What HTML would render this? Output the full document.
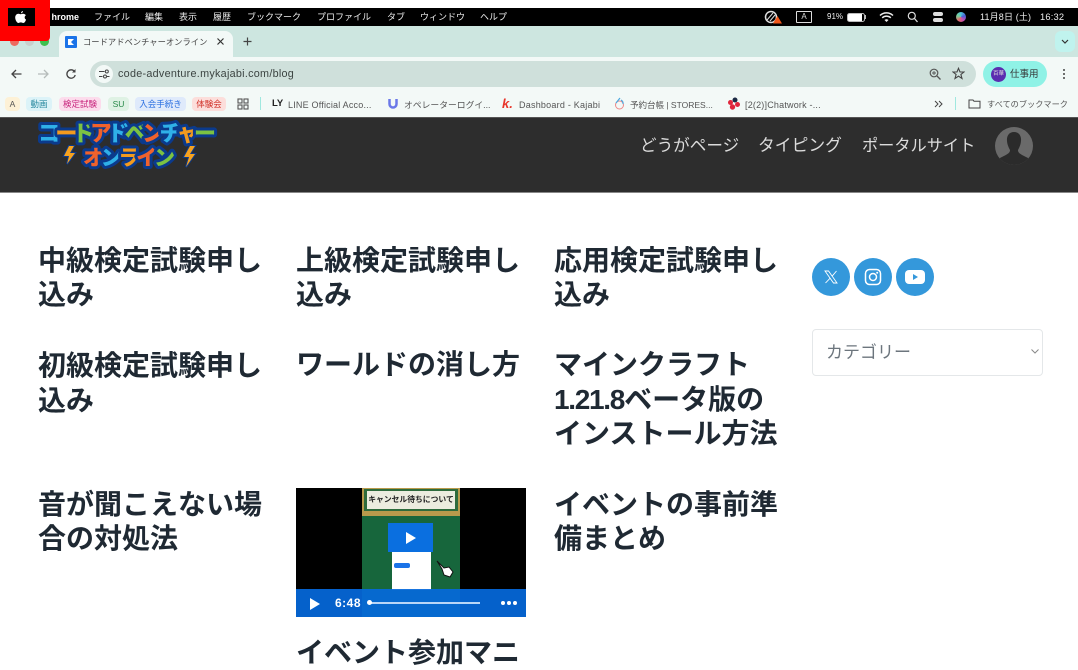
<!DOCTYPE html>
<html lang="ja"><head><meta charset="utf-8"><title>Blog</title>
<style>
html,body{margin:0;padding:0;background:#fff}
body{width:1078px;height:666px;overflow:hidden;position:relative;font-family:"Liberation Sans","Noto Sans CJK JP",sans-serif}
.a{position:absolute;white-space:nowrap}
.m{top:10px;font-size:9px;line-height:14px;color:#eee}
.bm{top:98px;font-size:9px;line-height:14px;color:#555}
.chip{top:97px;height:14px;line-height:15px;font-size:8.5px;border-radius:4px;text-align:center}
h2{position:absolute;margin:0;font-size:28px;line-height:34px;font-weight:700;color:#1f2933;white-space:nowrap;font-family:"Liberation Sans","Noto Sans CJK JP",sans-serif;-webkit-font-smoothing:antialiased}
.nav{top:135px;font-size:16.6px;line-height:22px;color:#dcdcdc}
</style></head><body>
<div class="a" style="left:0;top:26px;width:1078px;height:31px;background:#cde6e0"></div>
<div class="a" style="left:0;top:57px;width:1078px;height:60px;background:#f3f9f7"></div>
<div class="a" style="left:0;top:8px;width:1078px;height:18px;background:#000"></div>

<div class="a" style="left:10px;top:37px;width:9px;height:9px;border-radius:50%;background:#ee6a5f"></div>
<div class="a" style="left:25px;top:37px;width:9px;height:9px;border-radius:50%;background:#c9cfcc"></div>
<div class="a" style="left:40px;top:37px;width:9px;height:9px;border-radius:50%;background:#3fc04f"></div>
<div class="a" style="left:0;top:0;width:50px;height:41px;background:#f00;border-radius:0 0 4px 0"></div>
<div class="a" style="left:8px;top:8px;width:27px;height:18px;background:#000"></div>
<svg class="a" style="left:14px;top:10px" width="13" height="14" viewBox="0 0 13 14"><path d="M9 1C7.800 1.200 7 2.100 7 3.300C8.200 3.200 9 2.200 9 1ZM6.800 4.200C6 4.200 5.300 3.700 4.400 3.700C2.700 3.700 1.200 5.200 1.200 7.500C1.200 10 3 13 4.400 13C5.200 13 5.700 12.400 6.800 12.400C7.900 12.400 8.300 13 9.200 13C10.500 13 11.600 11 12.100 9.600C10.400 8.900 10.100 6.300 11.900 5.200C11.100 4.100 10 3.700 9.100 3.700C8.100 3.700 7.400 4.200 6.800 4.200Z" fill="#fff"/></svg>
<div class="a m" style="left:47px;font-weight:700;color:#fff;width:32px;overflow:hidden;direction:rtl">hrome</div>
<div class="a m" style="left:94px">ファイル</div>
<div class="a m" style="left:145px">編集</div>
<div class="a m" style="left:179px">表示</div>
<div class="a m" style="left:213px">履歴</div>
<div class="a m" style="left:247px">ブックマーク</div>
<div class="a m" style="left:317px">プロファイル</div>
<div class="a m" style="left:387px">タブ</div>
<div class="a m" style="left:420px">ウィンドウ</div>
<div class="a m" style="left:480px">ヘルプ</div>

<svg class="a" style="left:763px;top:10px" width="20" height="14" viewBox="0 0 20 14"><circle cx="8" cy="7" r="5.500" fill="none" stroke="#ddd" stroke-width="1.500"/><path d="M4 10L10 3M7 11L12 5" stroke="#ddd"/><path d="M14.500 6L19 13.500H10Z" fill="#f0571a"/></svg>
<div class="a" style="left:796px;top:11px;width:14px;height:10px;border:1px solid #ddd;border-radius:1px;color:#ddd;font-size:8px;line-height:10px;text-align:center">A</div>
<div class="a m" style="left:827px;font-size:8px">91%</div>
<div class="a" style="left:847px;top:13px;width:16px;height:7px;border:1px solid #bbb;border-radius:2.500px;background:linear-gradient(90deg,#fff 88%,#000 88%)"></div>
<div class="a" style="left:865px;top:15px;width:1px;height:4px;background:#bbb"></div>
<svg class="a" style="left:879px;top:11px" width="15" height="12" viewBox="0 0 15 12"><path d="M1 4.500C4.500 1 10.500 1 14 4.500M3.200 6.800C5.600 4.500 9.400 4.500 11.800 6.800" fill="none" stroke="#eee" stroke-width="1.500"/><path d="M5.500 9C6.700 8 8.300 8 9.500 9L7.500 11Z" fill="#eee"/></svg>
<svg class="a" style="left:907px;top:11px" width="11" height="12" viewBox="0 0 11 12"><circle cx="4.800" cy="4.800" r="3.500" fill="none" stroke="#ddd" stroke-width="1.200"/><path d="M7.500 7.500L10.500 11" stroke="#ddd" stroke-width="1.300"/></svg>
<div class="a" style="left:933px;top:12px;width:10px;height:4px;border-radius:2px;background:#ddd"></div>
<div class="a" style="left:933px;top:18px;width:10px;height:4px;border-radius:2px;background:#ddd"></div>
<div class="a" style="left:956px;top:12px;width:10px;height:10px;border-radius:50%;background:conic-gradient(#4ec5d8,#4a5fd8,#c44fb0,#e06a6a,#7ed09a,#4ec5d8)"></div>
<div class="a m" style="left:980px;font-size:9px;letter-spacing:.15px">11月8日 (土)</div>
<div class="a m" style="left:1040px;font-size:9.300px;letter-spacing:.2px">16:32</div>

<div class="a" style="left:59px;top:31px;width:174px;height:26px;background:#f3f9f7;border-radius:8px 8px 0 0"></div>
<div class="a" style="left:65px;top:36px;width:12px;height:12px;background:#1a73e8;border-radius:1px"></div>
<svg class="a" style="left:65px;top:36px" width="12" height="12" viewBox="0 0 12 12"><path d="M3 3H9L6 6L9 9H3Z" fill="#fff"/></svg>
<div class="a" style="left:83px;top:35px;font-size:8.300px;line-height:14px;color:#444">コードアドベンチャーオンライン</div>
<svg class="a" style="left:216px;top:37px" width="9" height="9" viewBox="0 0 9 9"><path d="M1.500 1.500L7.500 7.500M7.500 1.500L1.500 7.500" stroke="#333" stroke-width="1.200"/></svg>
<svg class="a" style="left:242px;top:36px" width="11" height="11" viewBox="0 0 11 11"><path d="M5.500 1.500V9.500M1.500 5.500H9.500" stroke="#444" stroke-width="1.200"/></svg>
<div class="a" style="left:1055px;top:31px;width:20px;height:21px;background:#c0f3ee;border-radius:6px"></div>
<svg class="a" style="left:1060px;top:38px" width="10" height="7" viewBox="0 0 10 7"><path d="M2 2L5 5L8 2" fill="none" stroke="#333" stroke-width="1.200"/></svg>

<svg class="a" style="left:10px;top:67px" width="70" height="14" viewBox="0 0 70 14"><path d="M11.500 7H2M6 3L2 7L6 11" fill="none" stroke="#444" stroke-width="1.300"/><path d="M28 7H38M34 3L38 7L34 11" fill="none" stroke="#b5bcba" stroke-width="1.300"/><path d="M64.500 4.500A4.200 4.200 0 1 0 65.200 8" fill="none" stroke="#444" stroke-width="1.300"/><path d="M65.500 2V5.500H62Z" fill="#444"/></svg>
<div class="a" style="left:90px;top:61px;width:886px;height:26px;background:#cfe0db;border-radius:13px"></div>
<div class="a" style="left:95px;top:65px;width:18px;height:18px;background:#f3f9f7;border-radius:50%"></div>
<svg class="a" style="left:98px;top:68px" width="12" height="12" viewBox="0 0 12 12"><path d="M1 3.500H6.500M1 8.500H4.500" stroke="#444" stroke-width="1.100"/><circle cx="8.800" cy="3.500" r="1.500" fill="none" stroke="#444"/><circle cx="7" cy="8.500" r="1.500" fill="none" stroke="#444"/><path d="M9 8.500H11.500" stroke="#444"/></svg>
<div class="a" style="left:118px;top:67px;font-size:10.800px;line-height:15px;color:#3c4442;letter-spacing:.27px">code-adventure.mykajabi.com/blog</div>
<svg class="a" style="left:929px;top:68px" width="12" height="12" viewBox="0 0 12 12"><circle cx="5" cy="5" r="3.800" fill="none" stroke="#555" stroke-width="1.200"/><path d="M8 8L11.500 11.500" stroke="#555" stroke-width="1.300"/><path d="M3 5H7M5 3V7" stroke="#555" stroke-width=".9"/></svg>
<svg class="a" style="left:952px;top:67px" width="13" height="13" viewBox="0 0 13 13"><path d="M6.500 1.300L8 5H12L8.900 7.500L10 11.500L6.500 9.200L3 11.500L4.100 7.500L1 5H5Z" fill="none" stroke="#444" stroke-width="1.100"/></svg>
<div class="a" style="left:983px;top:61px;width:64px;height:26px;background:#8ff2e6;border-radius:13px"></div>
<div class="a" style="left:991px;top:67px;width:15px;height:15px;background:#5b2db0;border-radius:50%;color:#ddd;font-size:5.500px;line-height:15px;text-align:center">百華</div>
<div class="a" style="left:1010px;top:67px;font-size:9.500px;line-height:15px;color:#333">仕事用</div>
<div class="a" style="left:1063px;top:69px;width:2px;height:2px;background:#444;border-radius:50%;box-shadow:0 4px 0 #444,0 8px 0 #444"></div>

<div class="a chip" style="left:5px;width:15px;background:#fdf1d6;color:#555">A</div>
<div class="a chip" style="left:26px;width:26px;background:#dcf3f8;color:#2a8aa0">動画</div>
<div class="a chip" style="left:59px;width:42px;background:#fcdcec;color:#c8267e">検定試験</div>
<div class="a chip" style="left:108px;width:21px;background:#dff2e4;color:#2a8a4a">SU</div>
<div class="a chip" style="left:135px;width:51px;background:#dfeafb;color:#2a6fe0">入会手続き</div>
<div class="a chip" style="left:192px;width:34px;background:#fcdedb;color:#d03028">体験会</div>
<svg class="a" style="left:237px;top:98px" width="12" height="12" viewBox="0 0 12 12"><g fill="none" stroke="#555" stroke-width="1.100"><rect x="1" y="1" width="4" height="4"/><rect x="7" y="1" width="4" height="4"/><rect x="1" y="7" width="4" height="4"/><rect x="7" y="7" width="4" height="4"/></g></svg>
<div class="a" style="left:260px;top:97px;width:1px;height:13px;background:#9fe8df"></div>
<div class="a" style="left:272px;top:97px;font-size:9.500px;line-height:14px;font-weight:700;color:#222">LY</div>
<div class="a bm" style="left:288px;letter-spacing:.2px">LINE Official Acco...</div>
<svg class="a" style="left:387px;top:97px" width="12" height="13" viewBox="0 0 12 13"><path d="M2.500 2V7A3.500 3.500 0 0 0 9.500 7V2" fill="none" stroke="#6a78e8" stroke-width="2.500"/></svg>
<div class="a bm" style="left:404px;font-size:8.800px">オペレーターログイ...</div>
<div class="a" style="left:502px;top:96px;font-size:13px;line-height:15px;font-weight:700;font-style:italic;color:#e8352a">k.</div>
<div class="a bm" style="left:519px;letter-spacing:.23px">Dashboard - Kajabi</div>
<svg class="a" style="left:613px;top:97px" width="13" height="14" viewBox="0 0 13 14"><circle cx="6.500" cy="8" r="4" fill="none" stroke="#e88" stroke-width="1"/><path d="M7 1L3 6M8 3A4 4 0 0 1 10 7" fill="none" stroke="#4aa8e0" stroke-width="1.200"/></svg>
<div class="a bm" style="left:630px;font-size:8.500px">予約台帳 | STORES...</div>
<svg class="a" style="left:727px;top:97px" width="14" height="14" viewBox="0 0 14 14"><circle cx="8" cy="3" r="2.500" fill="#1c2a44"/><circle cx="3.500" cy="5.500" r="2.500" fill="#e0263c"/><circle cx="10.500" cy="7.500" r="2.500" fill="#e0263c"/><circle cx="5.500" cy="10" r="2.700" fill="#e0263c"/></svg>
<div class="a bm" style="left:745px;letter-spacing:.2px">[2(2)]Chatwork -...</div>
<svg class="a" style="left:934px;top:100px" width="9" height="8" viewBox="0 0 9 8"><path d="M1 1L4 4L1 7M5 1L8 4L5 7" fill="none" stroke="#444"/></svg>
<div class="a" style="left:955px;top:97px;width:1px;height:13px;background:#9fe8df"></div>
<svg class="a" style="left:968px;top:98px" width="13" height="11" viewBox="0 0 13 11"><path d="M1 2H5L6 3.200H12V10H1Z" fill="none" stroke="#444"/></svg>
<div class="a bm" style="left:987px;font-size:8.200px">すべてのブックマーク</div>

<div class="a" style="left:0;top:117px;width:1078px;height:76px;background:#2d2d2d;border-top:1px solid #555;border-bottom:1px solid #888;box-sizing:border-box"></div>
<svg class="a" style="left:30px;top:118px" width="195" height="56" viewBox="0 0 195 56">
<g font-family="'Liberation Sans','Noto Sans CJK JP',sans-serif" font-weight="900" style="paint-order:stroke" stroke-linejoin="round">
<text x="8" y="23" font-size="22" textLength="178" stroke="#0b3a8c" stroke-width="6"><tspan fill="#2fb0e8">コ</tspan><tspan fill="#f39a1e">ー</tspan><tspan fill="#7cc242">ド</tspan><tspan fill="#f0622c">ア</tspan><tspan fill="#2fb0e8">ド</tspan><tspan fill="#7cc242">ベ</tspan><tspan fill="#f0622c">ン</tspan><tspan fill="#2fb0e8">チ</tspan><tspan fill="#f39a1e">ャ</tspan><tspan fill="#7cc242">ー</tspan></text>
<text x="53" y="47" font-size="21" textLength="92" stroke="#0b3a8c" stroke-width="6"><tspan fill="#f0622c">オ</tspan><tspan fill="#2fb0e8">ン</tspan><tspan fill="#f39a1e">ラ</tspan><tspan fill="#f0622c">イ</tspan><tspan fill="#7cc242">ン</tspan></text>
</g>
<path d="M39 28L34 38L39 38L37 46L45 35L40 35L44 28Z" fill="#f7a21e" stroke="#0b3a8c" stroke-width="2" paint-order="stroke"/>
<path d="M160 28L154 39L159 39L156 49L165 36L160 36L165 28Z" fill="#f7a21e" stroke="#0b3a8c" stroke-width="2" paint-order="stroke"/>
</svg>
<div class="a nav" style="left:640px">どうがページ</div>
<div class="a nav" style="left:758px;font-size:16.800px">タイピング</div>
<div class="a nav" style="left:862px;font-size:16.200px">ポータルサイト</div>
<svg class="a" style="left:995px;top:127px" width="38" height="38" viewBox="0 0 38 38"><defs><clipPath id="c"><circle cx="19" cy="19" r="19"/></clipPath></defs><g clip-path="url(#c)"><rect width="38" height="38" fill="#6a6a6a"/><path d="M19 5C14 5 11.500 9 12 14C12.300 18 14 21 15 23C15 26 13 27 5 31V38H33V31C25 27 23 26 23 23C24 21 25.700 18 26 14C26.500 9 24 5 19 5Z" fill="#2b2b2b"/></g></svg>

<h2 style="left:38px;top:244px">中級検定試験申し<br>込み</h2>
<h2 style="left:296px;top:244px">上級検定試験申し<br>込み</h2>
<h2 style="left:554px;top:244px">応用検定試験申し<br>込み</h2>
<h2 style="left:38px;top:348px;line-height:35px">初級検定試験申し<br>込み</h2>
<h2 style="left:296px;top:348px">ワールドの消し方</h2>
<h2 style="left:554px;top:348px;line-height:34.500px">マインクラフト<br><span style="letter-spacing:-1.300px">1.21.8</span>ベータ版の<br>インストール方法</h2>
<h2 style="left:38px;top:488px">音が聞こえない場<br>合の対処法</h2>
<h2 style="left:554px;top:488px">イベントの事前準<br>備まとめ</h2>
<h2 style="left:296px;top:636px">イベント参加マニ</h2>

<div class="a" style="left:296px;top:488px;width:230px;height:129px;background:#000;overflow:hidden">
 <div class="a" style="left:66px;top:0;width:98px;height:129px;background:#17663c"></div>
 <div class="a" style="left:66px;top:0;width:98px;height:28px;background:#b89a4c"></div>
 <div class="a" style="left:68px;top:1px;width:94px;height:22px;background:#2e6b3c"></div>
 <div class="a" style="left:71px;top:3px;width:88px;height:18px;background:#ececdf;color:#222;font-size:7.800px;line-height:18px;font-weight:700;text-align:center">キャンセル待ちについて</div>
 <div class="a" style="left:96px;top:62px;width:39px;height:40px;background:#fff"></div>
 <div class="a" style="left:92px;top:35px;width:45px;height:29px;background:#0a6fe0"></div>
 <svg class="a" style="left:108px;top:42px" width="14" height="16" viewBox="0 0 14 16"><path d="M2 2L12 8L2 14Z" fill="#fff"/></svg>
 <div class="a" style="left:98px;top:75px;width:16px;height:5px;background:#1a73e8;border-radius:2px"></div>
 <svg class="a" style="left:139px;top:71px" width="20" height="20" viewBox="0 0 20 20"><path d="M2 2L9 9L14 8L18 13L15 18L9 16L7 10Z" fill="#fff" stroke="#111"/></svg>
 <div class="a" style="left:0;top:101px;width:230px;height:28px;background:rgba(5,105,220,.92)"></div>
 <svg class="a" style="left:13px;top:109px" width="12" height="14" viewBox="0 0 12 14"><path d="M1 1L11 7L1 13Z" fill="#fff"/></svg>
 <div class="a" style="left:39px;top:107px;font-size:12px;line-height:16px;font-weight:700;color:#fff;letter-spacing:.5px">6:48</div>
 <div class="a" style="left:73px;top:114px;width:111px;height:2px;background:#b9d6f7"></div>
 <div class="a" style="left:71px;top:112px;width:5px;height:5px;border-radius:50%;background:#fff"></div>
 <div class="a" style="left:205px;top:113px;width:4px;height:4px;border-radius:50%;background:#fff;box-shadow:6px 0 0 #fff,12px 0 0 #fff"></div>
</div>

<div class="a" style="left:812px;top:258px;width:38px;height:38px;border-radius:50%;background:#3498db"></div>
<svg class="a" style="left:823px;top:269px" width="16" height="16" viewBox="0 0 16 16"><path d="M2 2H5.500L14 14H10.500ZM13.500 2L9 7.300M7 9.300L2.500 14" fill="none" stroke="#fff" stroke-width=".9"/></svg>
<div class="a" style="left:854px;top:258px;width:38px;height:38px;border-radius:50%;background:#3498db"></div>
<svg class="a" style="left:864px;top:268px" width="18" height="18" viewBox="0 0 18 18"><rect x="1.500" y="1.500" width="15" height="15" rx="4" fill="none" stroke="#fff" stroke-width="1.500"/><circle cx="9" cy="9" r="3.500" fill="none" stroke="#fff" stroke-width="1.500"/><circle cx="13.200" cy="4.800" r="1" fill="#fff"/></svg>
<div class="a" style="left:896px;top:258px;width:38px;height:38px;border-radius:50%;background:#3498db"></div>
<svg class="a" style="left:905px;top:269px" width="20" height="16" viewBox="0 0 20 16"><rect x="0" y="1" width="20" height="14" rx="4" fill="#fff"/><path d="M8 5L13 8L8 11Z" fill="#3498db"/></svg>

<div class="a" style="left:812px;top:329px;width:231px;height:47px;border:1px solid #e4e7e9;border-radius:4px;box-sizing:border-box;background:#fff"></div>
<div class="a" style="left:826px;top:341px;font-size:17px;line-height:24px;color:#6c757d">カテゴリー</div>
<svg class="a" style="left:1030px;top:348px" width="10" height="7" viewBox="0 0 10 7"><path d="M1.500 1.500L5 5L8.500 1.500" fill="none" stroke="#888" stroke-width="1"/></svg>
</body></html>
